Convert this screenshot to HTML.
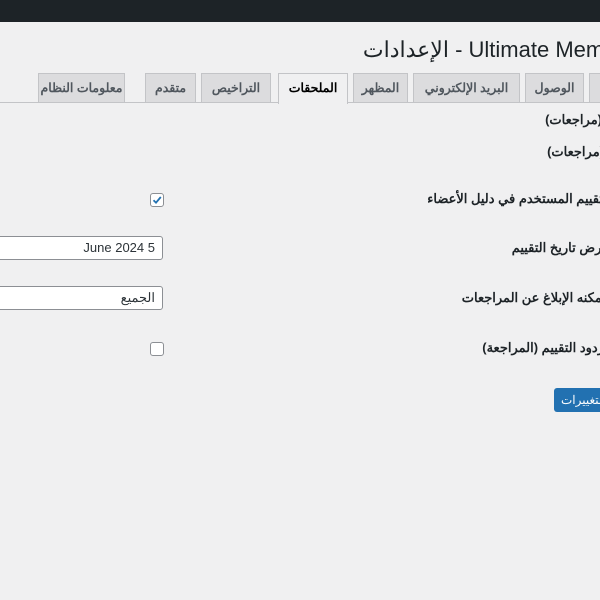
<!DOCTYPE html>
<html><head><meta charset="utf-8"><style>
body{margin:0;width:600px;height:600px;overflow:hidden;background:#f0f0f1;font-family:"Liberation Sans","Noto Sans CJK SC",sans-serif;position:relative;direction:rtl}
.bar{position:absolute;top:0;left:0;width:600px;height:22px;background:#1d2327}
.abs{position:absolute;white-space:nowrap}
.title{top:37px;right:-36px;font-size:22px;color:#1d2327}
.line{position:absolute;left:0;width:600px;top:102px;height:1px;background:#c3c4c7}
.tab{position:absolute;top:73px;height:28px;background:#dcdcde;border:1px solid #c3c4c7;border-bottom:none;font-size:12.5px;font-weight:600;color:#50575e;line-height:28px;text-align:center;white-space:nowrap;overflow:hidden}
.tab.act{background:#f0f0f1;color:#000;height:30px;z-index:2}
.lbl{font-size:13px;font-weight:600;color:#1d2327;right:0}
.cb{position:absolute;left:150px;width:12px;height:12px;border:1px solid #8c8f94;border-radius:3px;background:#fff}
.inp{position:absolute;left:-10px;width:171px;height:22px;border:1px solid #8c8f94;border-radius:3px;background:#fff;font-size:13px;color:#2c3338;line-height:22px;text-align:right;white-space:nowrap}
.btn{position:absolute;left:554px;top:388px;width:70px;height:24px;background:#2271b1;border-radius:3px;color:#fff;font-size:12px;line-height:24px;white-space:nowrap;overflow:hidden;direction:ltr;text-align:left;padding-left:7px;box-sizing:border-box}
</style></head><body>
<div class="bar"></div>
<div class="abs title">Ultimate Member - الإعدادات</div>
<div class="line"></div>
<div class="tab" style="left:38px;width:85px">معلومات النظام</div>
<div class="tab" style="left:145px;width:49px">متقدم</div>
<div class="tab" style="left:201px;width:68px">التراخيص</div>
<div class="tab act" style="left:278px;width:68px">الملحقات</div>
<div class="tab" style="left:353px;width:53px">المظهر</div>
<div class="tab" style="left:413px;width:105px">البريد الإلكتروني</div>
<div class="tab" style="left:525px;width:57px">الوصول</div>
<div class="tab" style="left:589px;width:40px">عام</div>
<div class="abs lbl" style="top:112px;right:-2px">(مراجعات)</div>
<div class="abs lbl" style="top:144px;right:-4px">(مراجعات)</div>
<div class="abs lbl" style="top:191px;right:-3px">تقييم المستخدم في دليل الأعضاء</div>
<div class="abs lbl" style="top:240px;right:-10px">عرض تاريخ التقييم</div>
<div class="abs lbl" style="top:290px;right:-6px">يمكنه الإبلاغ عن المراجعات</div>
<div class="abs lbl" style="top:340px;right:-4px">ردود التقييم (المراجعة)</div>
<div class="cb" style="top:193px"><svg width="12" height="12" viewBox="0 0 12 12" style="position:absolute;left:0;top:0"><path d="M2.5 6.2 L5 8.7 L9.8 3" stroke="#2271b1" stroke-width="1.8" fill="none"/></svg></div>
<div class="inp" style="top:236px"><span style="padding-right:7px">June 2024 5</span></div>
<div class="inp" style="top:286px"><span style="padding-right:7px">الجميع</span></div>
<div class="cb" style="top:342px"></div>
<div class="btn">التغييرات</div>
</body></html>
